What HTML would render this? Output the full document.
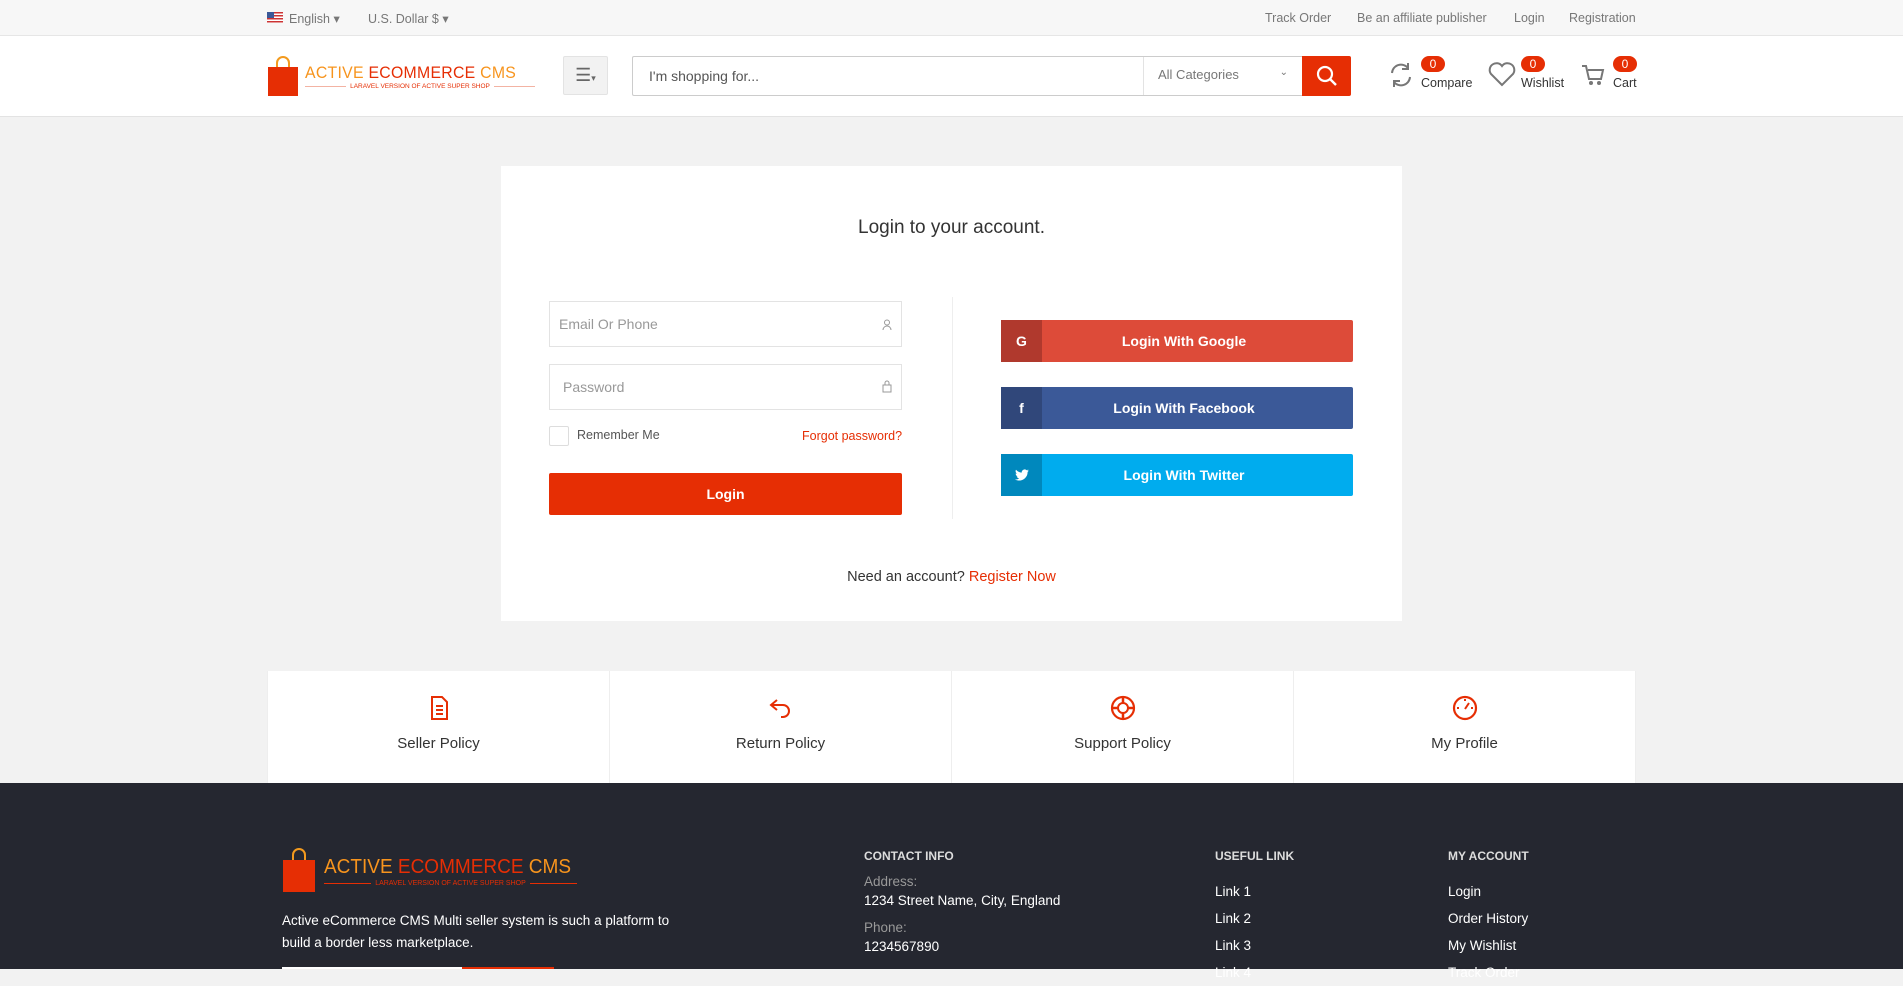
<!DOCTYPE html>
<html><head><meta charset="utf-8"><style>
*{box-sizing:border-box;margin:0;padding:0}
body{width:1903px;height:969px;overflow:hidden;background:#f2f2f2;font-family:"Liberation Sans",sans-serif;position:relative;color:#333}
.a{position:absolute}
.top{left:0;top:0;width:1903px;height:36px;background:#f7f7f7;border-bottom:1px solid #e6e6e6;font-size:12.5px;color:#777}
.hdr{left:0;top:36px;width:1903px;height:81px;background:#fff;border-bottom:1px solid #e3e3e3}
.card{left:501px;top:166px;width:901px;height:455px;background:#fff}
.inp{border:1px solid #e3e3e3;height:46px;width:353px;left:549px;font-size:14px;color:#999;padding:14px 9px}
.soc{left:1001px;width:352px;height:42px;color:#fff;font-weight:bold;font-size:14px;border-radius:2px;text-align:center;line-height:42px;padding-left:14px}
.soc span{position:absolute;left:0;top:0;width:41px;height:42px;text-align:center}
.pol{top:671px;height:112px;background:#fff;border-left:1px solid #eee;width:342px;text-align:center;font-size:15px;color:#333}
.ft{left:0;top:783px;width:1903px;height:186px;background:#252730;color:#fff;font-size:13.5px}
.h{font-weight:bold;font-size:12px;color:#ddd}
.badge{background:#e62e04;color:#fff;font-size:12px;border-radius:8px;width:24px;height:16px;text-align:center;line-height:16px}
</style></head><body>
<div class="a top">
 <div class="a" style="left:267px;top:12px;width:16px;height:11px;background:repeating-linear-gradient(#c33 0 1.5px,#fff 1.5px 3px)"><div style="width:7px;height:6px;background:#3b5998"></div></div>
 <div class="a" style="left:289px;top:11px">English ▾</div>
 <div class="a" style="left:368px;top:11px">U.S. Dollar $ ▾</div>
 <div class="a" style="left:1265px;top:11px">Track Order</div>
 <div class="a" style="left:1357px;top:11px">Be an affiliate publisher</div>
 <div class="a" style="left:1514px;top:11px">Login</div>
 <div class="a" style="left:1569px;top:11px">Registration</div>
</div>
<div class="a hdr">
 <svg class="a" style="left:267px;top:20px" width="32" height="40"><path d="M10 12V7a6 6 0 0 1 12 0v5" stroke="#f39a1e" stroke-width="2" fill="none"/><path d="M1 11h30v29H1z" fill="#e62e04"/></svg>
 <div class="a" style="left:305px;top:27px;font-size:17px;letter-spacing:.3px;color:#f7941d;transform:scaleX(.93);transform-origin:left">ACTIVE <span style="color:#e62e04">ECOMMERCE</span> CMS</div>
 <div class="a" style="left:305px;top:50px;width:230px;font-size:6.5px;color:#e62e04;text-align:center;border-top:1px solid #f3b3a3;line-height:0"><span style="background:#fff;padding:0 4px">LARAVEL VERSION OF ACTIVE SUPER SHOP</span></div>
 <div class="a" style="left:563px;top:20px;width:45px;height:39px;background:#f2f2f2;border:1px solid #e3e3e3;border-radius:2px;color:#666;font-size:18px;text-align:center;line-height:36px">☰<span style="font-size:9px">▾</span></div>
 <div class="a" style="left:632px;top:20px;width:670px;height:40px;border:1px solid #ccc;border-right:0;border-radius:2px 0 0 2px;font-size:14px;color:#555;padding:11px 16px">I'm shopping for...</div>
 <div class="a" style="left:1143px;top:21px;width:159px;height:38px;border-left:1px solid #e3e3e3;font-size:13px;color:#777;padding:10px 14px">All Categories<span style="float:right;font-size:10px">⌄</span></div>
 <div class="a" style="left:1302px;top:20px;width:49px;height:40px;background:#e62e04;border-radius:0 2px 2px 0"><svg width="49" height="40"><circle cx="23" cy="18" r="7" stroke="#fff" stroke-width="2.2" fill="none"/><path d="M28 23l6 6" stroke="#fff" stroke-width="2.4"/></svg></div>
 <svg class="a" style="left:1388px;top:25px" width="26" height="28"><path d="M4 12a9 9 0 0 1 16-5M22 16a9 9 0 0 1-16 5" stroke="#777" stroke-width="2" fill="none"/><path d="M20 2v6h-6M6 26v-6h6" stroke="#777" stroke-width="2" fill="none"/></svg>
 <div class="a badge" style="left:1421px;top:20px">0</div><div class="a" style="left:1421px;top:40px;font-size:12.5px">Compare</div>
 <svg class="a" style="left:1488px;top:25px" width="28" height="26"><path d="M14 24L3 13a6 6 0 0 1 11-8a6 6 0 0 1 11 8z" stroke="#777" stroke-width="2" fill="none"/></svg>
 <div class="a badge" style="left:1521px;top:20px">0</div><div class="a" style="left:1521px;top:40px;font-size:12.5px">Wishlist</div>
 <svg class="a" style="left:1581px;top:27px" width="24" height="24"><path d="M1 3h4l3 13h12l2-9H7" stroke="#777" stroke-width="2" fill="none"/><circle cx="10" cy="20" r="2" fill="#777"/><circle cx="18" cy="20" r="2" fill="#777"/></svg>
 <div class="a badge" style="left:1613px;top:20px">0</div><div class="a" style="left:1613px;top:40px;font-size:12.5px">Cart</div>
</div>
<div class="a card">
 <div class="a" style="left:0;top:51px;width:901px;text-align:center;font-size:19px;color:#333">Login to your account.</div>
 <div class="a" style="left:451px;top:131px;width:1px;height:222px;background:#eee"></div>
</div>
<div class="a inp" style="top:301px">Email Or Phone<svg style="float:right;margin-top:3px" width="10" height="12"><circle cx="5" cy="3.5" r="2.5" stroke="#999" fill="none"/><path d="M1 11a4 4 0 0 1 8 0" stroke="#999" fill="none"/></svg></div>
<div class="a inp" style="top:364px;padding-left:13px">Password<svg style="float:right" width="10" height="14"><rect x="1" y="6" width="8" height="7" stroke="#999" fill="none"/><path d="M3 6V4a2 2 0 0 1 4 0v2" stroke="#999" fill="none"/></svg></div>
<div class="a" style="left:549px;top:426px;width:20px;height:20px;border:1px solid #ddd;border-radius:2px"></div>
<div class="a" style="left:577px;top:428px;font-size:12.5px;color:#555">Remember Me</div>
<div class="a" style="left:802px;top:429px;font-size:12.5px;color:#e62e04">Forgot password?</div>
<div class="a" style="left:549px;top:473px;width:353px;height:42px;background:#e62e04;border-radius:2px;color:#fff;font-weight:bold;font-size:14px;text-align:center;line-height:42px">Login</div>
<div class="a soc" style="top:320px;background:#dd4b39"><span style="background:#b0392d">G</span>Login With Google</div>
<div class="a soc" style="top:387px;background:#3b5998"><span style="background:#30477a">f</span>Login With Facebook</div>
<div class="a soc" style="top:454px;background:#00acee"><span style="background:#0088bd"><svg width="14" height="12" style="margin-top:15px"><path d="M14 1.5l-1.7.5 1.2-1.5-1.8.7A3 3 0 0 0 6.7 3.6 8 8 0 0 1 1 .8a3 3 0 0 0 .9 3.8H.6A3 3 0 0 0 3 7.4H1.7a3 3 0 0 0 2.6 2A6 6 0 0 1 0 10.5 8.5 8.5 0 0 0 12.6 3z" fill="#fff"/></svg></span>Login With Twitter</div>
<div class="a" style="left:501px;top:569px;width:901px;text-align:center;font-size:14.5px;color:#333">Need an account? <span style="color:#e62e04">Register Now</span></div>
<div class="a pol" style="left:267px"><svg style="margin-top:23px" width="24" height="28"><path d="M5 3h10l5 5v17H5z" stroke="#e62e04" stroke-width="2" fill="none"/><path d="M9 12h7M9 16h7M9 20h7" stroke="#e62e04" stroke-width="2"/></svg><div style="margin-top:9px">Seller Policy</div></div>
<div class="a pol" style="left:609px"><svg style="margin-top:23px" width="28" height="28"><path d="M10 6L4 11l6 5M4 11h12a6 6 0 0 1 0 12h-2" stroke="#e62e04" stroke-width="2" fill="none"/></svg><div style="margin-top:9px">Return Policy</div></div>
<div class="a pol" style="left:951px"><svg style="margin-top:23px" width="28" height="28"><circle cx="14" cy="14" r="11" stroke="#e62e04" stroke-width="2.2" fill="none"/><circle cx="14" cy="14" r="5" stroke="#e62e04" stroke-width="2" fill="none"/><path d="M14 3v6M14 19v6M3 14h6M19 14h6" stroke="#e62e04" stroke-width="2.5"/></svg><div style="margin-top:9px">Support Policy</div></div>
<div class="a pol" style="left:1293px;border-right:1px solid #eee;width:343px"><svg style="margin-top:23px" width="28" height="28"><circle cx="14" cy="14" r="11" stroke="#e62e04" stroke-width="2.2" fill="none"/><path d="M14 15l4-6M14 5v2M6 14h2M20 14h2" stroke="#e62e04" stroke-width="2"/></svg><div style="margin-top:9px">My Profile</div></div>
<div class="a ft">
 <svg class="a" style="left:282px;top:64px" width="34" height="45"><path d="M11 14V8a6 6 0 0 1 12 0v6" stroke="#f39a1e" stroke-width="2" fill="none"/><path d="M1 13h32v32H1z" fill="#e62e04"/></svg>
 <div class="a" style="left:324px;top:73px;font-size:20px;color:#f7941d;transform:scaleX(.95);transform-origin:left">ACTIVE <span style="color:#e62e04">ECOMMERCE</span> CMS</div>
 <div class="a" style="left:324px;top:100px;width:253px;font-size:7px;color:#e62e04;text-align:center;border-top:1px solid #e62e04;line-height:0"><span style="background:#252730;padding:0 4px">LARAVEL VERSION OF ACTIVE SUPER SHOP</span></div>
 <div class="a" style="left:282px;top:127px;line-height:22px;width:420px">Active eCommerce CMS Multi seller system is such a platform to<br>build a border less marketplace.</div>
 <div class="a" style="left:282px;top:184px;width:180px;height:2px;background:#fff"></div><div class="a" style="left:462px;top:184px;width:92px;height:2px;background:#e62e04"></div>
 <div class="a h" style="left:864px;top:66px">CONTACT INFO</div>
 <div class="a" style="left:864px;top:91px;color:#999">Address:</div>
 <div class="a" style="left:864px;top:110px">1234 Street Name, City, England</div>
 <div class="a" style="left:864px;top:137px;color:#999">Phone:</div>
 <div class="a" style="left:864px;top:156px">1234567890</div>
 <div class="a h" style="left:1215px;top:66px">USEFUL LINK</div>
 <div class="a" style="left:1215px;top:95px;line-height:27px">Link 1<br>Link 2<br>Link 3<br>Link 4</div>
 <div class="a h" style="left:1448px;top:66px">MY ACCOUNT</div>
 <div class="a" style="left:1448px;top:95px;line-height:27px">Login<br>Order History<br>My Wishlist<br>Track Order</div>
</div>
</body></html>
